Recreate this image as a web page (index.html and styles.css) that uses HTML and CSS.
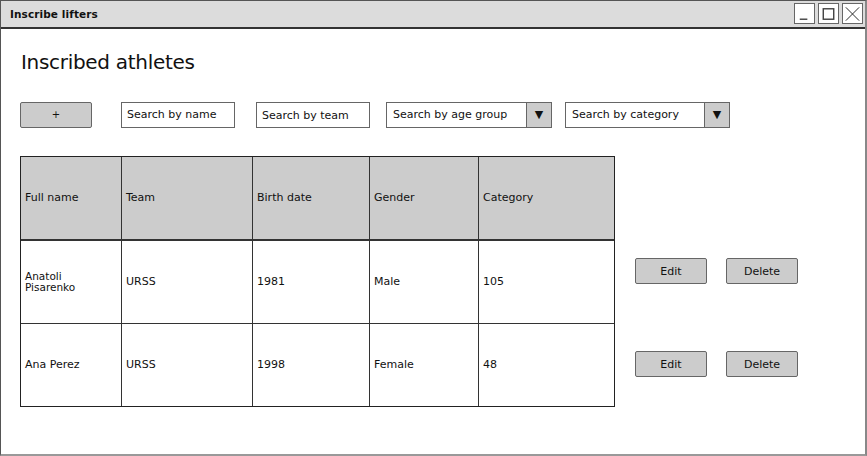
FILE: index.html
```html
<!DOCTYPE html>
<html>
<head>
<meta charset="utf-8">
<link rel="stylesheet" href="styles.css">
</head>
<body>
<div class="window">
  <div class="titlebar">
    <span class="title">Inscribe lifters</span>
    <div class="controls">
      <span class="ctl"><svg width="20" height="20" viewBox="0 0 20 20"><line x1="5" y1="15.5" x2="13" y2="15.5" stroke="#444" stroke-width="1.5"/></svg></span>
      <span class="ctl"><svg width="20" height="20" viewBox="0 0 20 20"><rect x="4.5" y="4.5" width="11" height="11" fill="none" stroke="#444" stroke-width="1.5"/></svg></span>
      <span class="ctl"><svg width="20" height="20" viewBox="0 0 20 20"><path d="M3 3 L17 17 M17 3 L3 17" stroke="#222" stroke-width="1"/></svg></span>
    </div>
  </div>
  <div class="content">
    <h1 class="heading">Inscribed athletes</h1>
    <div class="toolbar">
      <button class="btn add">+</button>
      <div class="input name">Search by name</div>
      <div class="input team">Search by team</div>
      <div class="select age"><span class="label">Search by age group</span><span class="arrow">▼</span></div>
      <div class="select cat"><span class="label">Search by category</span><span class="arrow">▼</span></div>
    </div>
    <div class="main">
      <div class="table">
        <div class="row head">
          <div class="cell c1">Full name</div>
          <div class="cell c2">Team</div>
          <div class="cell c3">Birth date</div>
          <div class="cell c4">Gender</div>
          <div class="cell c5">Category</div>
        </div>
        <div class="row">
          <div class="cell c1 tight">Anatoli<br>Pisarenko</div>
          <div class="cell c2">URSS</div>
          <div class="cell c3">1981</div>
          <div class="cell c4">Male</div>
          <div class="cell c5">105</div>
        </div>
        <div class="row last">
          <div class="cell c1">Ana Perez</div>
          <div class="cell c2">URSS</div>
          <div class="cell c3">1998</div>
          <div class="cell c4">Female</div>
          <div class="cell c5">48</div>
        </div>
      </div>
      <div class="actions">
        <div class="pair first"><button class="btn act">Edit</button><button class="btn act">Delete</button></div>
        <div class="pair second"><button class="btn act">Edit</button><button class="btn act">Delete</button></div>
      </div>
    </div>
  </div>
</div>
</body>
</html>
```

FILE: styles.css
```css
* { box-sizing: border-box; }
html, body { margin: 0; padding: 0; background: #fff; }
body { font-family: "DejaVu Sans", "Liberation Sans", sans-serif; color: #111; }
.window {
  width: 867px; height: 456px;
  border: 1px solid #555;
  border-right: 2px solid #888;
  border-bottom: 2px solid #999;
  display: flex; flex-direction: column;
  overflow: hidden;
}
.titlebar {
  height: 28px;
  background: #dcdcdc;
  border-bottom: 2px solid #333;
  display: flex; align-items: center; justify-content: space-between;
  padding-left: 9px; padding-right: 2px;
}
.title { font-size: 10.5px; font-weight: bold; letter-spacing: 0.1px; }
.controls { display: flex; gap: 3px; margin-top: -1px; }
.ctl {
  width: 21px; height: 21px; border: 1.5px solid #666; background: #fff;
  display: flex; align-items: center; justify-content: center;
}
.ctl svg { display: block; }
.content { padding-left: 19px; flex: 1; }
.heading {
  margin: 20px 0 0 1px; font-weight: normal; font-size: 20px; line-height: 26px;
  letter-spacing: -0.3px;
}
.toolbar { display: flex; align-items: center; margin-top: 26px; height: 27px; }
.btn {
  font-family: inherit; font-size: 11px; color: #111;
  background: #cccccc; border: 1.5px solid #666; border-radius: 2px;
  padding: 0; cursor: default;
}
.add { width: 72px; height: 26px; font-size: 10px; }
.input {
  height: 26px; border: 1.5px solid #666; background: #fff;
  font-size: 11px; display: flex; align-items: center; padding-left: 5px;
}
.name { width: 114px; margin-left: 29px; }
.team { width: 114px; margin-left: 21px; margin-top: 1px; }
.select {
  height: 26px; border: 1.5px solid #666; background: #fff;
  display: flex; align-items: stretch; font-size: 11px;
}
.select .label { flex: 1; display: flex; align-items: center; padding-left: 6px; }
.select .arrow {
  width: 25px; background: #ccc; border-left: 1.5px solid #666;
  display: flex; align-items: center; justify-content: center; font-size: 11px;
}
.age { width: 166px; margin-left: 16px; }
.cat { width: 165px; margin-left: 13px; }
.main { display: flex; margin-top: 28px; }
.table { width: 595px; border: 1.5px solid #222; }
.row { display: flex; height: 83px; border-bottom: 1.5px solid #333; }
.row.last { border-bottom: none; height: 82px; }
.row.head { background: #cccccc; height: 84px; border-bottom: 2px solid #333; }
.cell {
  border-right: 1.5px solid #333; display: flex; align-items: center;
  padding-left: 4px; font-size: 11px; line-height: 12px;
}
.cell.c5 { border-right: none; flex: 1; }
.c1 { width: 101px; }
.c2 { width: 131px; }
.c3 { width: 117px; }
.c4 { width: 109px; }
.tight { font-size: 10.5px; line-height: 11px; }
.actions { margin-left: 20px; display: flex; flex-direction: column; }
.pair { display: flex; gap: 19px; }
.pair.first { margin-top: 102px; }
.pair.second { margin-top: 67px; }
.act { width: 72px; height: 26px; font-size: 11px; }
```
